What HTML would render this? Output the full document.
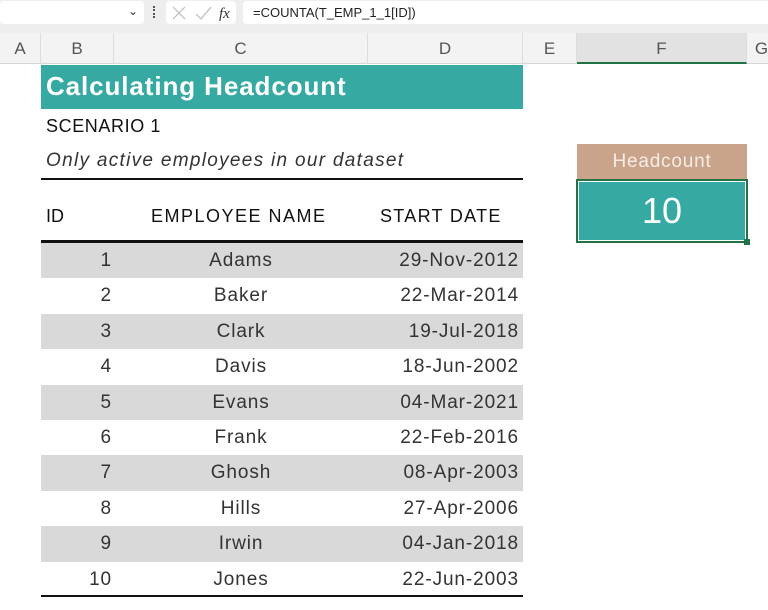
<!DOCTYPE html>
<html><head><style>
*{margin:0;padding:0;box-sizing:border-box}
body{width:768px;height:610px;background:#fff;font-family:"Liberation Sans",sans-serif;position:relative;overflow:hidden}
.a{position:absolute}
.box{background:#fff;border-radius:4px;top:1px;height:23px}
.ch{top:33px;height:31px;background:#f3f3f3;border-bottom:1px solid #d6d6d6;color:#555;font-size:17px;text-align:center;line-height:31px;border-right:1px solid #ddd}
.row{left:41px;width:482px;height:35.4px;font-size:19px;color:#333;letter-spacing:0.9px}
.row span{position:absolute;top:7px}
.g{background:#d9d9d9}
</style></head><body>
<div class="a" style="left:0;top:0;width:768px;height:33px;background:#eeeeee"></div>
<div class="a box" style="left:0;width:144px"><span class="a" style="left:128px;top:3px;font-size:12px;color:#333">&#8964;</span></div>
<div class="a" style="left:153px;top:6px;width:2px;height:12px;border-left:2px dotted #555"></div>
<div class="a box" style="left:166px;width:70px">
<svg class="a" style="left:4px;top:4px" width="62" height="16"><path d="M3 2 L15 14 M15 2 L3 14" stroke="#bbb" stroke-width="1.2"/><path d="M26 9 L31 14 L41 2" stroke="#bbb" stroke-width="1.2" fill="none"/><text x="49" y="13" font-family="Liberation Serif" font-style="italic" font-size="15" fill="#333">fx</text></svg></div>
<div class="a box" style="left:243px;width:530px;font-size:13px;line-height:23px;padding-left:10px;color:#222">=COUNTA(T_EMP_1_1[ID])</div>
<div class="a ch" style="left:0;width:41px">A</div>
<div class="a ch" style="left:41px;width:73px">B</div>
<div class="a ch" style="left:114px;width:254px">C</div>
<div class="a ch" style="left:368px;width:155px">D</div>
<div class="a ch" style="left:523px;width:54px">E</div>
<div class="a ch" style="left:577px;width:170px;background:#e2e2e2;border-bottom:2px solid #217346">F</div>
<div class="a ch" style="left:747px;width:30px">G</div>
<div class="a" style="left:41px;top:65px;width:482px;height:44px;background:#35a9a2;color:#fff;font-weight:bold;font-size:26px;line-height:42px;padding-left:5px;letter-spacing:0.9px">Calculating Headcount</div>
<div class="a" style="left:46px;top:116px;font-size:18px;color:#111;letter-spacing:0.6px">SCENARIO 1</div>
<div class="a" style="left:46px;top:150px;font-size:19px;font-style:italic;color:#333;letter-spacing:1.3px">Only active employees in our dataset</div>
<div class="a" style="left:41px;top:178px;width:482px;height:2px;background:#111"></div>
<div class="a" style="left:46px;top:206px;font-size:18px;color:#111">ID</div>
<div class="a" style="left:151px;top:206px;font-size:18px;color:#111;letter-spacing:1.5px">EMPLOYEE NAME</div>
<div class="a" style="left:380px;top:206px;font-size:18px;color:#111;letter-spacing:1.3px">START DATE</div>
<div class="a" style="left:41px;top:240px;width:482px;height:3px;background:#111"></div>
<div class="a" style="left:41px;top:595px;width:482px;height:2px;background:#111"></div>
<div id="rows"></div>
<div class="a" style="left:577px;top:144px;width:170px;height:35px;background:#c9a48a;color:#f5ede6;font-size:19px;text-align:center;line-height:35px;letter-spacing:0.8px">Headcount</div>
<div class="a" style="left:576px;top:179px;width:172px;height:64px;background:#35a9a2;border:2px solid #217346;box-shadow:inset 0 0 0 1px #fff;color:#fff;font-size:36px;text-align:center;line-height:60px">10</div>
<div class="a" style="left:744px;top:239px;width:6px;height:6px;background:#217346"></div>
<script>
var d=[["1","Adams","29-Nov-2012"],["2","Baker","22-Mar-2014"],["3","Clark","19-Jul-2018"],["4","Davis","18-Jun-2002"],["5","Evans","04-Mar-2021"],["6","Frank","22-Feb-2016"],["7","Ghosh","08-Apr-2003"],["8","Hills","27-Apr-2006"],["9","Irwin","04-Jan-2018"],["10","Jones","22-Jun-2003"]];
var h="";d.forEach(function(r,i){h+='<div class="a row'+(i%2==0?' g':'')+'" style="top:'+(243+i*35.4)+'px"><span style="right:411px">'+r[0]+'</span><span style="left:0;width:400px;text-align:center">'+r[1]+'</span><span style="right:4px">'+r[2]+'</span></div>';});
document.getElementById("rows").innerHTML=h;
</script>
</body></html>
